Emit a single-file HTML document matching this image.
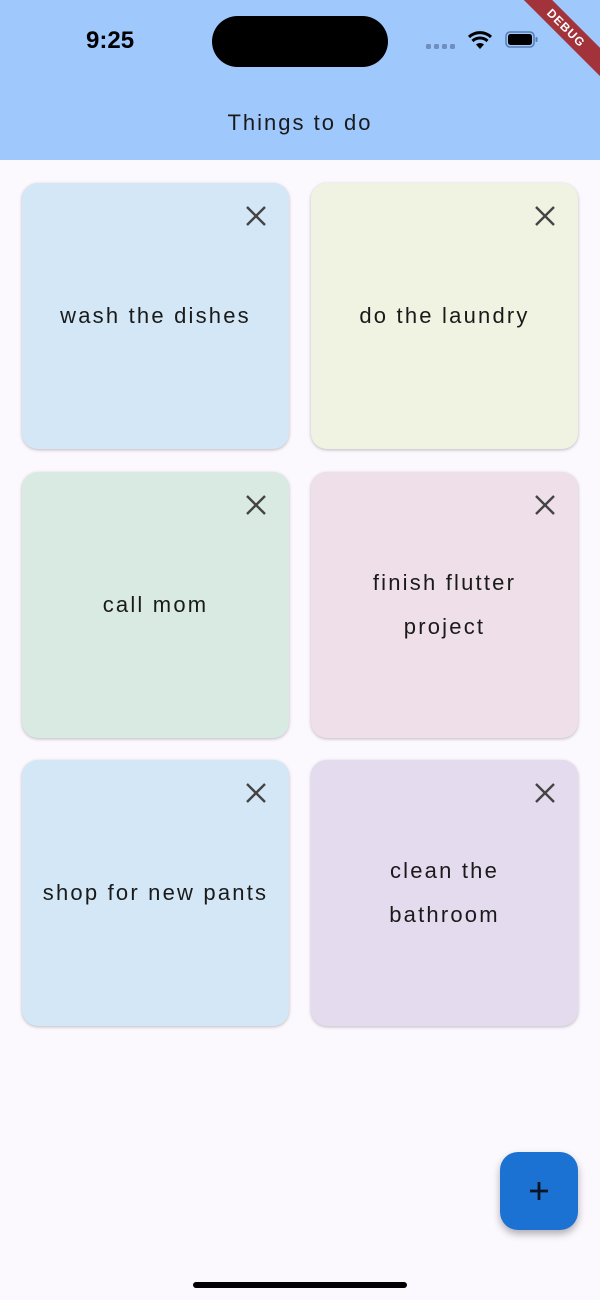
<!DOCTYPE html>
<html><head><meta charset="utf-8"><style>
*{margin:0;padding:0;box-sizing:border-box}
body{width:600px;height:1300px;background:#fbf8fe;position:relative;overflow:hidden;font-family:"Liberation Sans",sans-serif}
.bar{position:absolute;left:0;top:0;width:600px;height:160px;background:#9fc8fd}
.time{position:absolute;left:86px;top:27px;font-size:24px;font-weight:600;color:#000}
.island{position:absolute;left:212px;top:16px;width:176px;height:51px;background:#000;border-radius:26px}
.title{position:absolute;left:0;width:600px;top:110px;text-align:center;font-size:22px;letter-spacing:2px;color:#1a1a1a}
.card{position:absolute;width:267px;height:266px;border-radius:16px;box-shadow:0 1px 3px rgba(0,0,0,.25);display:flex;align-items:center;justify-content:center;text-align:center;font-size:22px;letter-spacing:2.2px;line-height:44px;color:#1a1a1a;padding:0 6px}
.card svg{position:absolute;right:22px;top:22px}
.fab{position:absolute;left:500px;top:1152px;width:78px;height:78px;border-radius:18px;background:#1c72d2;box-shadow:0 4px 8px rgba(0,0,0,.3)}
.home{position:absolute;left:193px;top:1282px;width:214px;height:6px;border-radius:3px;background:#000}
.debug{position:absolute;left:501px;top:18px;width:130px;height:20px;background:#a3333b;color:#fff;font-size:12px;font-weight:bold;text-align:center;line-height:20px;transform:rotate(45deg);letter-spacing:1px}
</style></head><body>
<div class="bar"></div>
<div class="time">9:25</div>
<div class="island"></div>
<svg style="position:absolute;left:426px;top:44px" width="32" height="6"><g fill="#6f8fbf"><rect x="0" y="0" width="5" height="5" rx="1.5"/><rect x="8" y="0" width="5" height="5" rx="1.5"/><rect x="16" y="0" width="5" height="5" rx="1.5"/><rect x="24" y="0" width="5" height="5" rx="1.5"/></g></svg>
<svg style="position:absolute;left:467px;top:30px" width="26" height="20" viewBox="0 0 26 20"><path d="M13 19 L9 14.5 A6 6 0 0 1 17 14.5Z" fill="#000"/><path d="M5.5 11 A11 11 0 0 1 20.5 11" stroke="#000" stroke-width="3" fill="none"/><path d="M2 7 A16 16 0 0 1 24 7" stroke="#000" stroke-width="3" fill="none"/></svg>
<svg style="position:absolute;left:505px;top:30px" width="34" height="20"><rect x="1" y="2" width="28" height="15" rx="4" fill="none" stroke="#5a7ab0" stroke-width="1.5"/><rect x="3" y="4" width="24" height="11" rx="2.5" fill="#000"/><rect x="30.5" y="7" width="2" height="5" rx="1" fill="#5a7ab0"/></svg>
<div class="debug">DEBUG</div>
<div class="title">Things to do</div>

<div class="card" style="left:22px;top:183px;background:#d3e7f6">wash the dishes<svg width="22" height="22" viewBox="0 0 22 22"><path d="M2 2L20 20M20 2L2 20" stroke="#444" stroke-width="2.4"/></svg></div>
<div class="card" style="left:311px;top:183px;background:#f1f3e2">do the laundry<svg width="22" height="22" viewBox="0 0 22 22"><path d="M2 2L20 20M20 2L2 20" stroke="#444" stroke-width="2.4"/></svg></div>
<div class="card" style="left:22px;top:472px;background:#d9eae3">call mom<svg width="22" height="22" viewBox="0 0 22 22"><path d="M2 2L20 20M20 2L2 20" stroke="#444" stroke-width="2.4"/></svg></div>
<div class="card" style="left:311px;top:472px;background:#efdfe9;padding:0 40px">finish flutter project<svg width="22" height="22" viewBox="0 0 22 22"><path d="M2 2L20 20M20 2L2 20" stroke="#444" stroke-width="2.4"/></svg></div>
<div class="card" style="left:22px;top:760px;background:#d3e7f6;padding:0">shop for new pants<svg width="22" height="22" viewBox="0 0 22 22"><path d="M2 2L20 20M20 2L2 20" stroke="#444" stroke-width="2.4"/></svg></div>
<div class="card" style="left:311px;top:760px;background:#e4dbee;padding:0 50px">clean the bathroom<svg width="22" height="22" viewBox="0 0 22 22"><path d="M2 2L20 20M20 2L2 20" stroke="#444" stroke-width="2.4"/></svg></div>

<div class="fab"><svg style="position:absolute;left:28px;top:28px" width="22" height="22"><path d="M11 2V20M2 11H20" stroke="#0a1422" stroke-width="2.8"/></svg></div>
<div class="home"></div>
</body></html>
